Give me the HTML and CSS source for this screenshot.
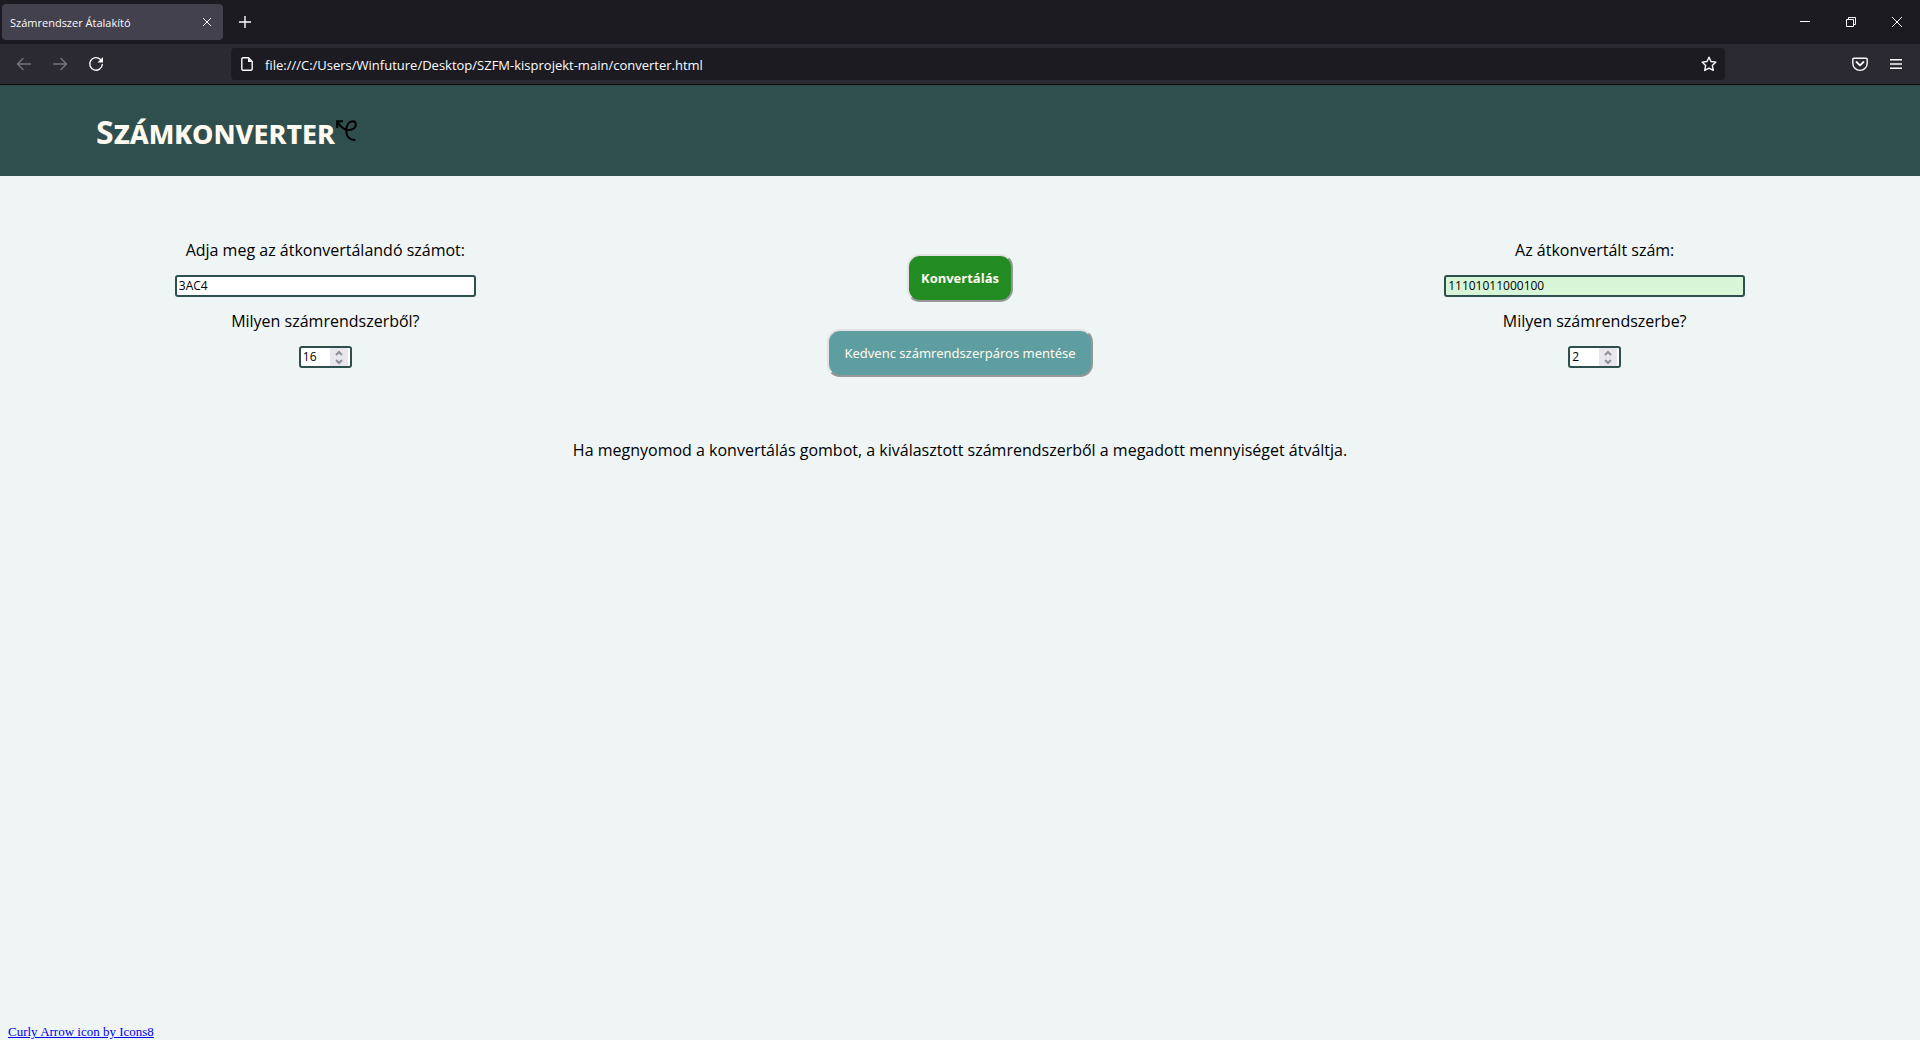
FILE: index.html
```html
<!DOCTYPE html>
<html lang="hu">
<head>
<meta charset="utf-8">
<title>Számrendszer Átalakító</title>
<link rel="stylesheet" href="styles.css">
</head>
<body>
<div class="browser">
  <div class="tab-bar">
    <div class="tab">
      <span class="tab-title">Számrendszer Átalakító</span>
      <button class="icon-button" aria-label="Lap bezárása"><svg width="10" height="10" viewBox="0 0 10 10"><path d="M1 1l8 8M9 1l-8 8"/></svg></button>
    </div>
    <button class="icon-button new-tab" aria-label="Új lap"><svg width="12" height="12" viewBox="0 0 12 12"><path class="wide" d="M6 0v12M0 6h12"/></svg></button>
    <div class="window-controls">
      <button class="icon-button" aria-label="Kis méret"><svg width="10" height="10" viewBox="0 0 10 10"><path d="M0 4.5h10"/></svg></button>
      <button class="icon-button" aria-label="Előző méret"><svg width="10" height="10" viewBox="0 0 10 10"><path d="M.5 2.5h7v7h-7zM2.500 2.500v-2h7v7h-2"/></svg></button>
      <button class="icon-button" aria-label="Bezárás"><svg width="10" height="10" viewBox="0 0 10 10"><path d="M0 0l10 10M10 0L0 10"/></svg></button>
    </div>
  </div>
  <div class="nav-bar">
    <div class="nav-buttons">
      <button class="icon-button faded" aria-label="Vissza"><svg width="16" height="16" viewBox="0 0 16 16"><path class="wide" d="M14.500 8H1.500M7 2.500L1.500 8l5.500 5.500"/></svg></button>
      <button class="icon-button faded" aria-label="Előre"><svg width="16" height="16" viewBox="0 0 16 16"><path class="wide" d="M1.500 8h13M9 2.500L14.500 8 9 13.500"/></svg></button>
      <button class="icon-button" aria-label="Frissítés"><svg width="16" height="16" viewBox="0 0 16 16"><path class="wide" d="M14.300 8.500A6.300 6.300 0 1 1 12.500 3.500L14 5"/><path class="solid" d="M15 1v5.500H9.500z"/></svg></button>
    </div>
    <div class="url-box">
      <svg width="12" height="14" viewBox="0 0 12 14"><path class="wide" d="M2 .8h5.500L11.200 4.500V12a1.200 1.200 0 0 1-1.200 1.200H2A1.200 1.200 0 0 1 .8 12V2A1.200 1.200 0 0 1 2 .8z"/><path class="solid" d="M7 1v4h4z"/></svg>
      <input class="url" type="text" aria-label="Cím" value="file:///C:/Users/Winfuture/Desktop/SZFM-kisprojekt-main/converter.html">
      <button class="icon-button" aria-label="Könyvjelző"><svg width="16" height="16" viewBox="0 0 16 16"><path class="wide" d="M8 1.200l2 4.300 4.900.600-3.600 3.300 1 5L8 12.200l-4.300 2.200 1-5L1.100 6.100 6 5.500z"/></svg></button>
    </div>
    <div class="tools">
      <button class="icon-button" aria-label="Pocket"><svg width="16" height="16" viewBox="0 0 16 16"><path class="wide" d="M2 2.200h12a1.200 1.200 0 0 1 1.200 1.200v3.800a7.200 7.200 0 0 1-14.400 0V3.400A1.200 1.200 0 0 1 2 2.200z"/><path class="heavy" d="M4.500 6L8 9.300 11.500 6"/></svg></button>
      <button class="icon-button" aria-label="Menü"><svg width="12" height="10" viewBox="0 0 12 10"><path class="wide" d="M0 .700h12M0 5h12M0 9.300h12"/></svg></button>
    </div>
  </div>
</div>
<header class="site-header">
  <h1>Számkonverter</h1>
  <svg class="logo" width="22" height="22" viewBox="0 0 22 22"><path d="M8 1.200H2.200V8M2.200 1.200C4.500 5.500 7 8.200 11 9.600 15.500 10.800 20.800 9 20.800 4.500 20.800 2.200 19.500 1.200 17.500 1.200 13 1.700 11 6.500 11.300 12c.4 5 4 8 9 8"/></svg>
</header>
<main>
  <div class="converter">
    <section class="column">
      <div class="field"><label for="source">Adja meg az átkonvertálandó számot:</label><input class="value" id="source" type="text" value="3AC4"></div>
      <div class="field"><label for="from">Milyen számrendszerből?</label>
        <div class="stepper"><input id="from" type="number" value="16"><svg width="18" height="18" viewBox="0 0 18 18"><path d="M6 7l3-3 3 3M6 12l3 3 3-3"/></svg></div></div>
    </section>
    <section class="column actions">
      <button class="convert">Konvertálás</button>
      <button class="save">Kedvenc számrendszerpáros mentése</button>
    </section>
    <section class="column">
      <div class="field"><label for="result">Az átkonvertált szám:</label><input class="value result" id="result" type="text" value="11101011000100" readonly></div>
      <div class="field"><label for="to">Milyen számrendszerbe?</label>
        <div class="stepper"><input id="to" type="number" value="2"><svg width="18" height="18" viewBox="0 0 18 18"><path d="M6 7l3-3 3 3M6 12l3 3 3-3"/></svg></div></div>
    </section>
  </div>
  <p class="help">Ha megnyomod a konvertálás gombot, a kiválasztott számrendszerből a megadott mennyiséget átváltja.</p>
</main>
<footer><a href="https://icons8.com/icon/curly-arrow">Curly Arrow icon by Icons8</a></footer>
</body>
</html>
```
FILE: styles.css
```css
* { box-sizing: border-box; }
body {
  margin: 0;
  min-height: 100vh;
  display: flex;
  flex-direction: column;
  background: #eff5f5;
  color: #000;
  font: 16px/22px "Open Sans", sans-serif;
}
button, input { font: inherit; }
svg { display: block; flex: none; fill: none; stroke: currentColor; stroke-width: 1; }
.wide { stroke-width: 1.4; stroke-linecap: round; stroke-linejoin: round; }
.heavy { stroke-width: 1.8; stroke-linecap: round; stroke-linejoin: round; }
.solid { fill: currentColor; stroke: none; }

.browser { color: #fbfbfe; border-bottom: 1px solid #0c0c0d; }
.icon-button {
  display: flex;
  align-items: center;
  justify-content: center;
  padding: 0;
  border: 0;
  background: none;
  color: inherit;
}
.faded { color: #77767d; }
.tab-bar { display: flex; align-items: center; height: 44px; padding-left: 2px; background: #1c1b22; }
.tab {
  display: flex;
  align-items: center;
  justify-content: space-between;
  width: 221px;
  height: 36px;
  padding: 0 11px 0 8px;
  border-radius: 4px;
  background: #42414d;
}
.tab-title { font-size: 11px; line-height: 24px; padding-top: 2px; }
.new-tab { margin-left: 16px; }
.window-controls { display: flex; gap: 36px; margin-left: auto; padding-right: 18px; }
.nav-bar { display: flex; align-items: center; height: 40px; background: #2b2a33; }
.nav-buttons { display: flex; gap: 20px; width: 231px; padding-left: 16px; }
.url-box {
  display: flex;
  align-items: center;
  flex: 1;
  height: 32px;
  padding: 0 8px 0 10px;
  border-radius: 4px;
  background: #1c1b22;
}
.url { flex: 1; min-width: 0; padding: 2px 0 0 12px; border: 0; background: none; color: inherit; font-size: 13px; }
.tools { display: flex; align-items: center; justify-content: flex-end; gap: 22px; width: 195px; padding-right: 18px; }

.site-header { display: flex; align-items: center; height: 91px; padding-left: 5%; background: #2f4f4f; color: floralwhite; }
h1 { margin: 0; padding-top: 2px; font-family: "Noto Sans", sans-serif; font-size: 32px; line-height: 44px; font-variant: small-caps; }
.logo { color: #000; stroke-width: 2; }

main { flex: 1; padding: 63px 8px 0; }
.converter { display: grid; grid-template-columns: repeat(3, 1fr); }
.column { display: flex; flex-direction: column; align-items: center; gap: 13px; }
.field { display: flex; flex-direction: column; align-items: center; gap: 14px; }
.value, .stepper { height: 22px; border: 2px solid #2f4f4f; border-radius: 3px; background: #fff; }
.value { width: 301px; padding: 0 2px; font-size: 12px; }
.result { background: #d7f5d7; }
.stepper { display: flex; width: 53px; padding-right: 2px; }
.stepper input {
  flex: 1;
  min-width: 0;
  padding: 0 2px;
  border: 0;
  background: none;
  font-size: 12px;
  line-height: 18px;
  appearance: textfield;
}
.stepper input::-webkit-inner-spin-button { appearance: none; margin: 0; }
.stepper svg { background: #e9e7ed; color: #8f8f9d; stroke-width: 2; }
.actions { padding-top: 15px; gap: 27px; }
.actions button {
  height: 48px;
  padding: 0 12px;
  border: 2px solid;
  border-color: #e3e3e3 #979797 #979797 #e3e3e3;
  border-radius: 13px;
  color: floralwhite;
  font-size: 13px;
}
.actions .convert { background: forestgreen; font-weight: bold; }
.actions .save { padding: 0 15px; background: cadetblue; font-family: "Noto Sans", sans-serif; }
.help { margin: 62px 0 0; text-align: center; }
footer { padding: 0 8px; font: 13px/16px "Liberation Serif", serif; }
footer a { color: #0000ee; }
```
